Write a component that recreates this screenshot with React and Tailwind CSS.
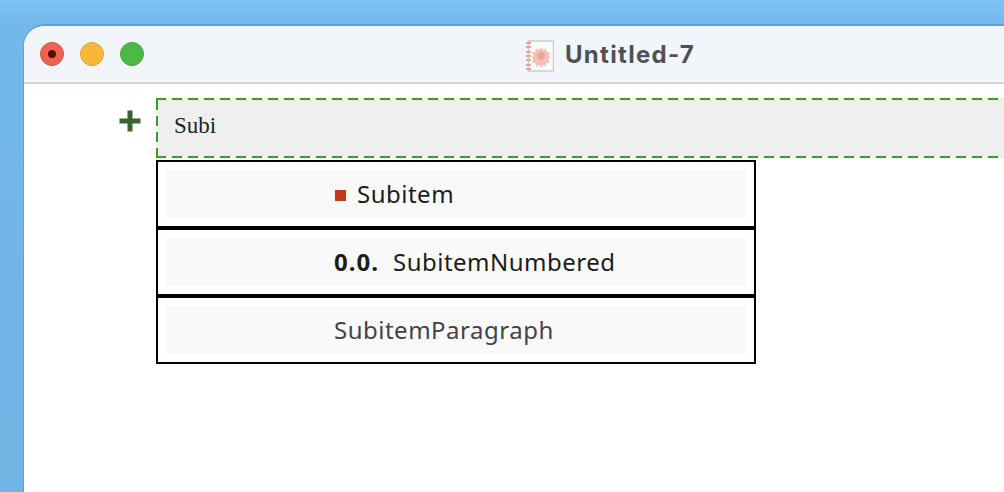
export default function App() {
  const rowText = "font-['Noto_Sans','Open_Sans',sans-serif] text-[24px] leading-[48px] tracking-[0.5px]";
  return (
    <div className="w-[1004px] h-[492px] overflow-hidden bg-[linear-gradient(180deg,#7cc5f7_0px,#72b8e9_26px,#70b4e4_100%)] pl-[23px] pt-[24px]">
      <div className="h-[480px] rounded-tl-[22px] border-l border-t-2 border-[#649fcd] bg-white overflow-hidden">
        <div className="relative flex h-[58px] items-center border-b-2 border-[#d4d4d6] bg-[#f2f5f9] pl-4 gap-4">
          <div className="flex h-6 w-6 items-center justify-center rounded-full border border-[#d9503f] bg-[#ee6352]">
            <div className="h-2 w-2 rounded-full bg-[#5a1208]" />
          </div>
          <div className="h-6 w-6 rounded-full border border-[#dfa030] bg-[#f7b73c]" />
          <div className="h-6 w-6 rounded-full border border-[#3fa535] bg-[#4cb944]" />
          <div className="absolute left-[502px] top-[11px] flex items-center gap-[11px]">
            <svg width="28" height="32" viewBox="0 0 28 32">
              <rect x="2.500" y="1" width="25" height="30" fill="#fbfbfb" stroke="#cfcfcf" strokeWidth="1.600" />
              {[3, 7, 12, 16, 20, 25, 29].map((y) => (
                <rect key={y} x="0" y={y - 1} width="5" height="2" fill="#eba591" />
              ))}
              <path d="M15 7l2 3 3-1.500 .5 3.500 3.500 .5-1.500 3 2 2-2 2 1.500 3-3.500 .5-.5 3.500-3-1.500-2 3-2-3-3 1.500-.5-3.500-3.500-.5 1.500-3-2-2 2-2-1.500-3 3.500-.5 .5-3.500 3 1.500z" fill="#f3c3b8" />
              <circle cx="15" cy="16" r="4" fill="#eba898" />
            </svg>
            <span className="mb-[2px] font-['Inter',sans-serif] text-[24px] font-bold tracking-[1.3px] text-[#505155]">Untitled-7</span>
          </div>
        </div>
        <div className="flex flex-col pl-[132px]">
          <div className="relative mt-[14px] h-[60px] bg-[#efefef] pl-[18px] font-['Liberation_Serif',serif] text-[23px] leading-[56px] text-[#222] [background-image:repeating-linear-gradient(90deg,#3a9d23_0_10px,transparent_10px_16px),repeating-linear-gradient(90deg,#3a9d23_0_10px,transparent_10px_16px),repeating-linear-gradient(0deg,#3a9d23_0_10px,transparent_10px_16px)] [background-size:842px_2px,842px_2px,2px_60px] [background-position:0_0,0_100%,0_0] [background-repeat:no-repeat]">
            Subi
            <svg className="absolute left-[-38px] top-[11px]" width="24" height="24" viewBox="0 0 24 24">
              <path d="M9.500 1.500h5v8h8v5h-8v8h-5v-8h-8v-5h8z" fill="#3c5f34" />
            </svg>
          </div>
          <div className="mt-[2px] w-[600px] text-[#1c1c1c]">
            <div className="border-2 border-black p-2">
              <div className={`flex items-center bg-[#f9f9f9] pl-[169px] ${rowText}`}>
                <span className="mr-[11px] mt-[3px] h-[11px] w-[11px] bg-[#c0391b]" />
                Subitem
              </div>
            </div>
            <div className="border-2 border-black p-2">
              <div className={`bg-[#f9f9f9] pl-[168px] ${rowText}`}>
                <span className="mr-[14px] font-bold tracking-[1px]">0.0.</span>
                SubitemNumbered
              </div>
            </div>
            <div className="border-2 border-black p-2">
              <div className={`bg-[#f9f9f9] pl-[168px] text-[#444] ${rowText}`}>SubitemParagraph</div>
            </div>
          </div>
        </div>
      </div>
    </div>
  );
}
